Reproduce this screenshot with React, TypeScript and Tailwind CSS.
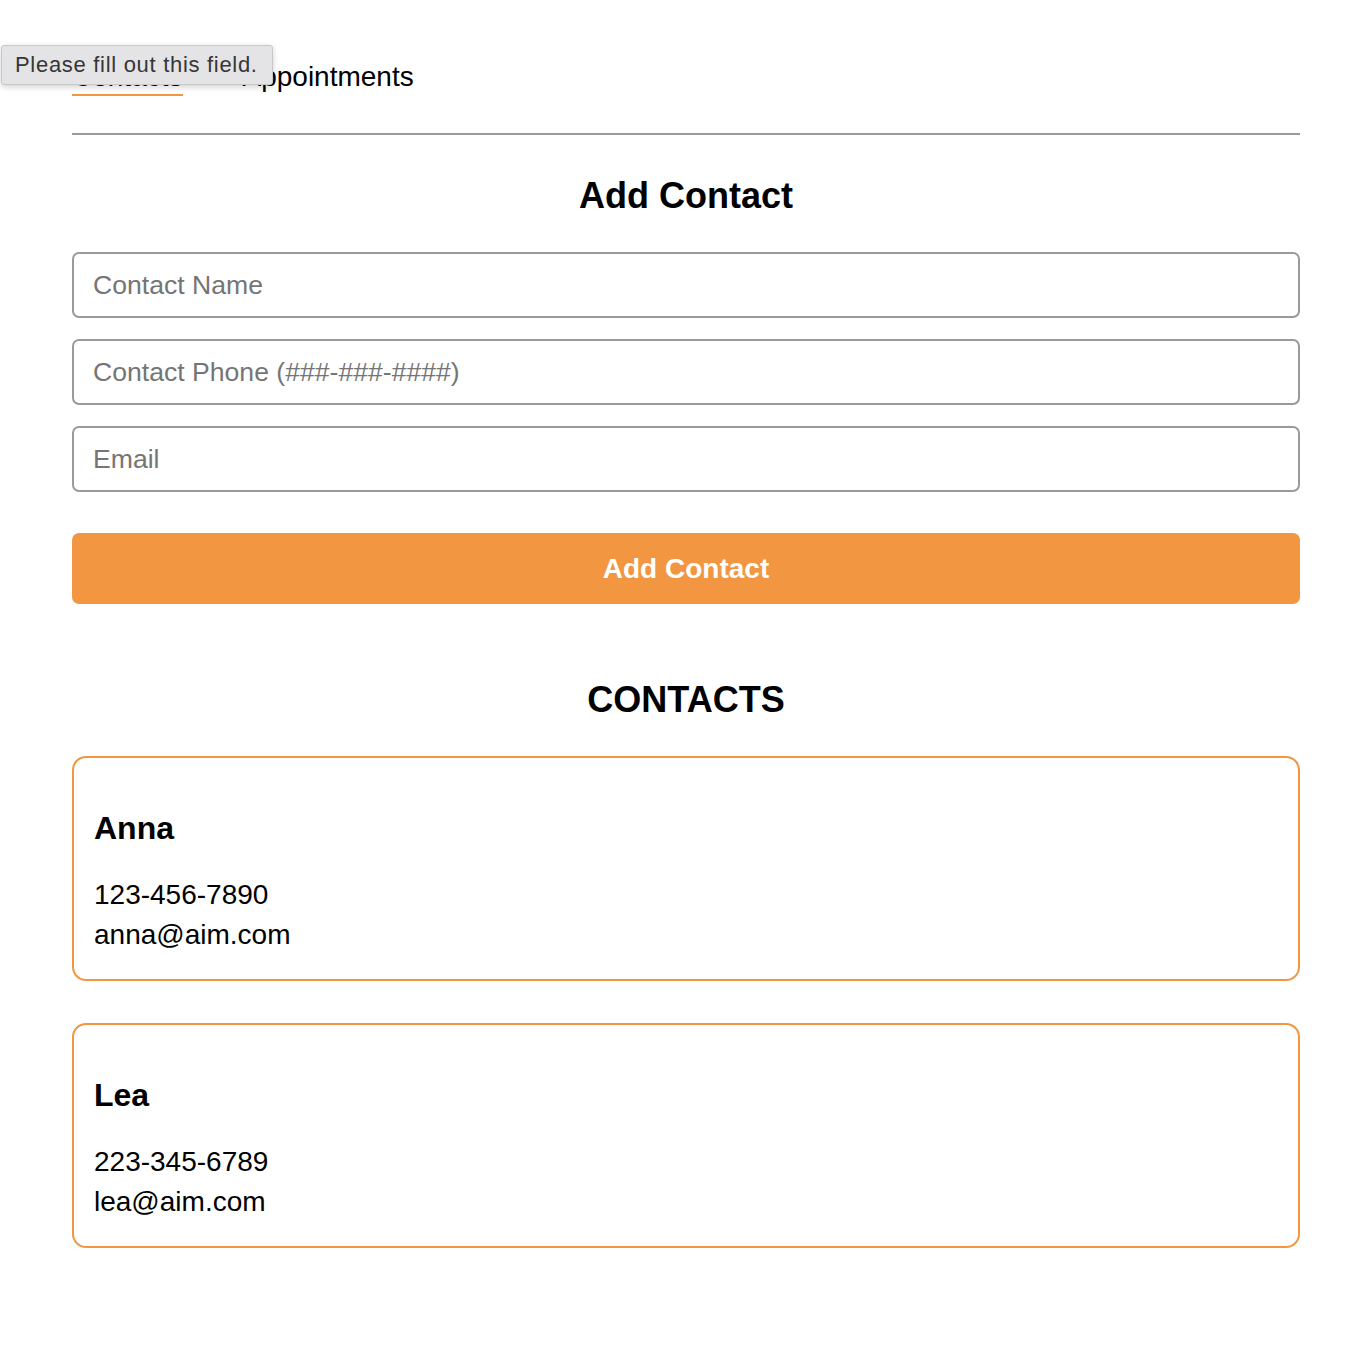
import React from 'react';

const contacts = [
  { name: 'Anna', phone: '123-456-7890', email: 'anna@aim.com' },
  { name: 'Lea', phone: '223-345-6789', email: 'lea@aim.com' },
];

const App = () => {
  return (
    <div className="relative min-h-[1354px] bg-white text-black font-['Liberation_Sans',Arial,sans-serif]">
      {/* browser validation bubble */}
      <div className="absolute left-[1px] top-[45px] z-10 h-[40px] w-[272px] rounded-[3px] border border-[#c8c8ca] bg-[#e4e4e6] pl-[13px] text-[22px] leading-[38px] tracking-[0.7px] text-[#363636] shadow-[0_2px_6px_rgba(0,0,0,0.18)]">
        Please fill out this field.
      </div>

      <div className="ml-[72px] w-[1228px]">
        {/* Tabs */}
        <nav className="flex gap-[60px] pt-[61px] pb-[37px] border-b-2 border-[#9a9a9a] text-[28px] leading-[32px]">
          <span className="pb-[1px] border-b-2 border-[#f39642]">Contacts</span>
          <span>Appointments</span>
        </nav>

        {/* Add contact form */}
        <h2 className="mt-[40px] text-center text-[36px] font-bold leading-[41px]">Add Contact</h2>
        <form className="mt-[36px] flex flex-col gap-[21px]">
          <input
            placeholder="Contact Name"
            className="h-[66px] w-full rounded-[7px] border-2 border-[#9a9a9a] px-[19px] text-[26.6px] placeholder:text-[#757575] outline-none"
          />
          <input
            placeholder="Contact Phone (###-###-####)"
            className="h-[66px] w-full rounded-[7px] border-2 border-[#9a9a9a] px-[19px] text-[26.6px] placeholder:text-[#757575] outline-none"
          />
          <input
            placeholder="Email"
            className="h-[66px] w-full rounded-[7px] border-2 border-[#9a9a9a] px-[19px] text-[26.6px] placeholder:text-[#757575] outline-none"
          />
          <button
            type="button"
            className="mt-[20px] h-[71px] w-full rounded-[7px] bg-[#f39642] text-[28px] font-bold text-white"
          >
            Add Contact
          </button>
        </form>

        {/* Contact list */}
        <h2 className="mt-[75px] text-center text-[36px] font-bold leading-[41px]">CONTACTS</h2>
        <div className="mt-[36px] flex flex-col gap-[42px]">
          {contacts.map((c) => (
            <div key={c.name} className="rounded-[14px] border-2 border-[#f39642] px-[20px] pt-[52px] pb-[24px]">
              <h3 className="text-[32px] font-bold leading-[37px]">{c.name}</h3>
              <p className="mt-[28px] text-[28px] leading-[40px]">{c.phone}</p>
              <p className="text-[28px] leading-[40px]">{c.email}</p>
            </div>
          ))}
        </div>
      </div>
    </div>
  );
};

export default App;
